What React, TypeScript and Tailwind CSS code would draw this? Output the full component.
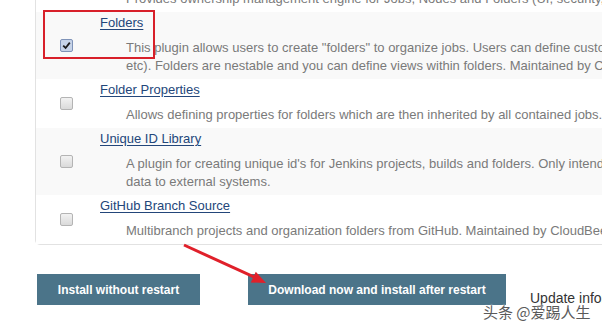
import React from 'react';

type Plugin = {
    name: string;
    lines: string[];
    checked?: boolean;
    shaded?: boolean;
};

const plugins: Plugin[] = [
    {
        name: 'Folders',
        checked: true,
        shaded: true,
        lines: [
            'This plugin allows users to create "folders" to organize jobs. Users can define custom taxonomies (like by project type, organization type',
            'etc). Folders are nestable and you can define views within folders. Maintained by CloudBees, Inc.',
        ],
    },
    {
        name: 'Folder Properties',
        lines: ['Allows defining properties for folders which are then inherited by all contained jobs.'],
    },
    {
        name: 'Unique ID Library',
        shaded: true,
        lines: [
            "A plugin for creating unique id's for Jenkins projects, builds and folders. Only intended for use with plugins that export Jenkins",
            'data to external systems.',
        ],
    },
    {
        name: 'GitHub Branch Source',
        lines: ['Multibranch projects and organization folders from GitHub. Maintained by CloudBees, Inc.'],
    },
];

function Checkbox({ checked }: { checked?: boolean }) {
    if (checked) {
        return (
            <span className="flex h-[13px] w-[13px] items-center justify-center rounded-[2px] border border-[#7f93b8] bg-[#c6d3e8]">
                <svg width="9" height="9" viewBox="0 0 9 9">
                    <path d="M1.2 4.6 L3.6 7 L7.8 1.6" fill="none" stroke="#1b1b1b" strokeWidth="1.8" />
                </svg>
            </span>
        );
    }
    return (
        <span className="block h-[13px] w-[13px] rounded-[2px] border border-[#b4b4b4] bg-gradient-to-b from-[#f2f2f2] to-[#dadada]" />
    );
}

function PluginRow({ plugin }: { plugin: Plugin }) {
    return (
        <div className={`flex ${plugin.shaded ? 'bg-[#f9f9f9]' : 'bg-white'}`}>
            <div className="flex w-[60px] shrink-0 items-center justify-center">
                <Checkbox checked={plugin.checked} />
            </div>
            <div className="pl-[4px] pt-[2px] pb-[4px]">
                <a href="#" className="block leading-[18px] text-[#23467a] underline underline-offset-2">
                    {plugin.name}
                </a>
                <div className="mt-[7px] pl-[26px] leading-[18px] text-[#7a7a7a]">
                    {plugin.lines.map((line) => (
                        <div key={line} className="whitespace-nowrap">
                            {line}
                        </div>
                    ))}
                </div>
            </div>
        </div>
    );
}

export default function App() {
    return (
        <div className="relative h-[331px] w-[602px] overflow-hidden bg-white font-['Liberation_Sans',Arial,sans-serif] text-[13px]">
            <div className="-mt-[28px] ml-[35px] w-[700px] rounded-bl-[5px] border-b border-l border-[#e2e2e2]">
                {/* cut-off row above */}
                <div className="flex h-[40px] flex-col justify-end pb-[4px] pl-[90px]">
                    <div className="whitespace-nowrap leading-[18px] text-[#7a7a7a]">
                        Provides ownership management engine for Jobs, Nodes and Folders (UI, security, pipeline integration)
                    </div>
                </div>
                {plugins.map((p) => (
                    <PluginRow key={p.name} plugin={p} />
                ))}
            </div>

            <div className="ml-[37px] mt-[29px] flex items-start">
                <button className="h-[31px] w-[163px] shrink-0 bg-[#4b7489] text-[12px] font-bold text-white">
                    Install without restart
                </button>
                <button className="ml-[48px] h-[31px] w-[258px] shrink-0 bg-[#4b7489] text-[12px] font-bold text-white">
                    Download now and install after restart
                </button>
                <span className="ml-[24px] mt-[15px] shrink-0 whitespace-nowrap text-[14px] leading-[18px] text-[#333]">
                    Update information
                </span>
            </div>

            {/* annotations */}
            <div className="absolute left-[43px] top-[10px] h-[49px] w-[112px] border-2 border-[#d8202a]" />
            <svg className="absolute left-0 top-0" width="602" height="331">
                <line x1="184" y1="245" x2="256" y2="278" stroke="#e0202a" strokeWidth="3" />
                <polygon points="266,283 250.8,282.5 255.8,271.7" fill="#e0202a" />
            </svg>
            <div className="absolute left-[483px] top-[303px] whitespace-nowrap font-['Noto_Sans_CJK_SC',sans-serif] text-[15px] leading-[18px] text-[#5a5a5a] [text-shadow:0_0_2px_#fff,0_0_2px_#fff]">
                头条 @爱踢人生
            </div>
        </div>
    );
}
